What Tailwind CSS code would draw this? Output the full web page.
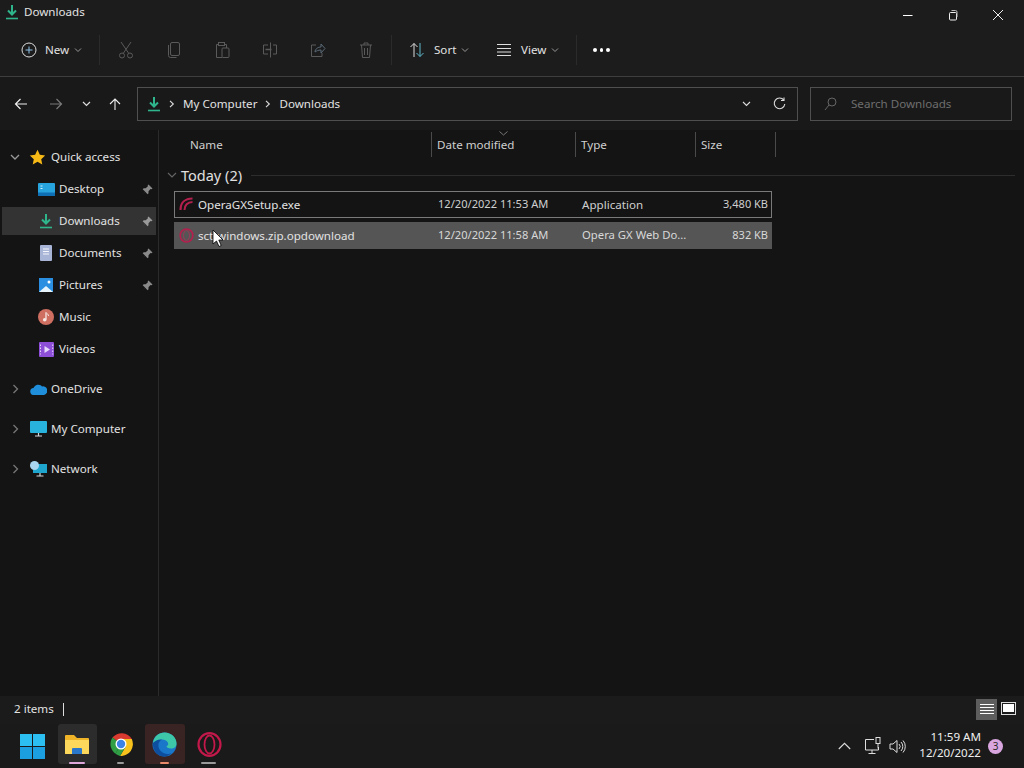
<!DOCTYPE html>
<html lang="en">
<head>
  <meta charset="UTF-8">
  <title>Downloads</title>
  <script src="https://cdn.jsdelivr.net/npm/@tailwindcss/browser@4"></script>
</head>
<body class="relative w-[1024px] h-[768px] overflow-hidden flex flex-col bg-[#141414] text-[#e2e2e2] font-['Noto_Sans','Open_Sans',sans-serif] text-[11.6px]">

  <!-- barra de titulo -->
  <header class="h-[24px] flex items-center bg-[#1c1c1c] shrink-0">
    <svg class="ml-[5px] w-[14px] h-[16px]" viewBox="0 0 14 16"><path d="M7 1v9M3 6.500l4 4 4-4" fill="none" stroke="#2fb58c" stroke-width="2"/><path d="M1 14.500h12" stroke="#2fb58c" stroke-width="1.6"/></svg>
    <span class="ml-[5px]">Downloads</span>
    <div class="ml-auto mt-[5px] flex items-center text-white">
      <svg class="w-[12px] h-[12px] mr-[33px]" viewBox="0 0 12 12"><path d="M1 6.500h9.500" stroke="#fff" stroke-width="1"/></svg>
      <svg class="w-[12px] h-[12px] mr-[33px]" viewBox="0 0 12 12"><rect x="2.500" y="3.500" width="7" height="7.500" rx="1" fill="none" stroke="#eee"/><path d="M4.500 1.500h4a1.500 1.500 0 0 1 1.500 1.500v5" fill="none" stroke="#bbb"/></svg>
      <svg class="w-[12px] h-[12px] mr-[20px]" viewBox="0 0 12 12"><path d="M1 1l10 10M11 1L1 11" stroke="#eee" stroke-width="1"/></svg>
    </div>
  </header>

  <!-- barra de ferramentas -->
  <div class="h-[53px] flex items-center bg-[#1c1c1c] border-b border-[#3e3e3e] shrink-0">
    <div class="w-[99px] flex items-center pl-[21px]">
      <svg class="w-[16px] h-[16px]" viewBox="0 0 16 16"><circle cx="8" cy="8" r="7" fill="none" stroke="#ddd"/><path d="M8 4.500v7M4.500 8h7" stroke="#8fc3e8"/></svg>
      <span class="ml-[8px]">New</span>
      <svg class="ml-[5px] w-[8px] h-[8px]" viewBox="0 0 8 8"><path d="M1 2.500l3 3 3-3" fill="none" stroke="#999"/></svg>
    </div>
    <div class="w-px h-[30px] bg-[#2b2b2b]"></div>
    <div class="flex items-center gap-[28px] pl-[18px] pr-[18px] w-[292px]">
      <svg class="w-[16px] h-[18px] shrink-0" viewBox="0 0 16 18"><path d="M3 1l7.500 11M13 1L5.500 12" fill="none" stroke="#5a5a5a"/><circle cx="4" cy="14.500" r="2.500" fill="none" stroke="#5a5a5a"/><circle cx="12" cy="14.500" r="2.500" fill="none" stroke="#5a5a5a"/></svg>
      <svg class="w-[16px] h-[18px] shrink-0 ml-[4px]" viewBox="0 0 16 18"><rect x="4.500" y="1.500" width="9" height="13" rx="1.500" fill="none" stroke="#5a5a5a"/><path d="M2.500 4v10.500a2 2 0 0 0 2 2h6" fill="none" stroke="#5a5a5a"/></svg>
      <svg class="w-[16px] h-[18px] shrink-0 ml-[4px]" viewBox="0 0 16 18"><path d="M5 3.500H2.500v13H8M10 3.500h2.500V7" fill="none" stroke="#5a5a5a"/><rect x="4.500" y="1.500" width="6" height="3" fill="none" stroke="#5a5a5a"/><rect x="8" y="7" width="7" height="9.500" rx="1" fill="none" stroke="#5a5a5a"/></svg>
      <svg class="w-[16px] h-[18px] shrink-0 ml-[4px]" viewBox="0 0 16 18"><path d="M6 4H1.500v9H6M11 4h3.500v9H11M8.500 1.500v15" fill="none" stroke="#5a5a5a"/><path d="M3.500 8.500h6" stroke="#5a5a5a" stroke-width="1.500"/></svg>
      <svg class="w-[16px] h-[18px] shrink-0 ml-[4px]" viewBox="0 0 16 18"><path d="M6 4H1.500v11.500h10.500V12" fill="none" stroke="#5a5a5a"/><path d="M5 11c0-3 3-5 6-5V3l4 4.500-4 4.500V9c-3 0-4.500 1-6 2z" fill="none" stroke="#5a6a78"/></svg>
      <svg class="w-[14px] h-[18px] shrink-0 ml-[5px]" viewBox="0 0 14 18"><path d="M1 4h12M5 4V2h4v2M2.500 4l1 12.500h7l1-12.500M5.500 7v7M8.500 7v7" fill="none" stroke="#5a5a5a"/></svg>
    </div>
    <div class="w-px h-[30px] bg-[#2b2b2b] -ml-[1px]"></div>
    <div class="flex items-center w-[104px] pl-[17px]">
      <svg class="w-[16px] h-[16px]" viewBox="0 0 16 16"><path d="M5 15V1.500M1.500 5L5 1.500 8.500 5" fill="none" stroke="#ddd"/><path d="M11 1v13.500M7.500 11l3.500 3.500 3.500-3.500" fill="none" stroke="#5fb7c9"/></svg>
      <span class="ml-[9px]">Sort</span>
      <svg class="ml-[5px] w-[8px] h-[8px]" viewBox="0 0 8 8"><path d="M1 2.500l3 3 3-3" fill="none" stroke="#999"/></svg>
    </div>
    <div class="flex items-center w-[80px]">
      <svg class="w-[16px] h-[14px]" viewBox="0 0 16 14"><path d="M1 1.500h14M1 5.500h14M1 9h14M1 12.500h14" stroke="#ddd"/></svg>
      <span class="ml-[9px]">View</span>
      <svg class="ml-[5px] w-[8px] h-[8px]" viewBox="0 0 8 8"><path d="M1 2.500l3 3 3-3" fill="none" stroke="#999"/></svg>
    </div>
    <div class="w-px h-[30px] bg-[#2b2b2b]"></div>
    <div class="ml-[16px] flex gap-[3px]">
      <span class="w-[3.500px] h-[3.500px] rounded-full bg-white"></span>
      <span class="w-[3.500px] h-[3.500px] rounded-full bg-white"></span>
      <span class="w-[3.500px] h-[3.500px] rounded-full bg-white"></span>
    </div>
  </div>

  <!-- barra de endereco -->
  <div class="h-[53px] flex items-center bg-[#191919] shrink-0">
    <div class="w-[137px] flex items-center pl-[14px] shrink-0">
      <svg class="w-[14px] h-[14px]" viewBox="0 0 14 14"><path d="M13 7H2M6.500 2L1.500 7l5 5" fill="none" stroke="#eee" stroke-width="1.200"/></svg>
      <svg class="ml-[21px] w-[14px] h-[14px]" viewBox="0 0 14 14"><path d="M1 7h11M7.500 2l5 5-5 5" fill="none" stroke="#7a7a7a" stroke-width="1.200"/></svg>
      <svg class="ml-[19px] w-[9px] h-[9px]" viewBox="0 0 9 9"><path d="M1 3l3.500 3.500L8 3" fill="none" stroke="#ddd" stroke-width="1.200"/></svg>
      <svg class="ml-[17px] w-[14px] h-[14px]" viewBox="0 0 14 14"><path d="M7 13V2M2 7l5-5 5 5" fill="none" stroke="#eee" stroke-width="1.100"/></svg>
    </div>
    <div class="w-[661px] h-[34px] flex items-center border border-[#4f4f4f] pl-[9px] pr-[11px] shrink-0">
      <svg class="w-[14px] h-[16px]" viewBox="0 0 14 16"><path d="M7 1v9M3 6.500l4 4 4-4" fill="none" stroke="#2fb58c" stroke-width="2"/><path d="M1 14.500h12" stroke="#2fb58c" stroke-width="1.600"/></svg>
      <svg class="ml-[8px] w-[6px] h-[8px]" viewBox="0 0 6 8"><path d="M1 .800L4.300 4 1 7.200" fill="none" stroke="#ddd" stroke-width="1.100"/></svg>
      <span class="ml-[8px]">My Computer</span>
      <svg class="ml-[8px] w-[6px] h-[8px]" viewBox="0 0 6 8"><path d="M1 .800L4.300 4 1 7.200" fill="none" stroke="#ddd" stroke-width="1.100"/></svg>
      <span class="ml-[8px]">Downloads</span>
      <svg class="ml-auto w-[9px] h-[9px]" viewBox="0 0 9 9"><path d="M1 3l3.500 3.500L8 3" fill="none" stroke="#ddd" stroke-width="1.100"/></svg>
      <svg class="ml-[22px] w-[13px] h-[13px]" viewBox="0 0 13 13"><path d="M10.800 3.200A5.300 5.300 0 1 0 11.800 7" fill="none" stroke="#ddd" stroke-width="1.100"/><path d="M11 .500v3H8" fill="none" stroke="#ddd" stroke-width="1.100"/></svg>
    </div>
    <div class="ml-[12px] w-[202px] h-[34px] flex items-center border border-[#4f4f4f] pl-[13px] shrink-0 text-[#6e6e6e]">
      <svg class="w-[13px] h-[14px]" viewBox="0 0 13 14"><circle cx="8" cy="5" r="4" fill="none" stroke="#666"/><path d="M5 8l-4 5" stroke="#666"/></svg>
      <span class="ml-[14px]">Search Downloads</span>
    </div>
  </div>

  <div class="flex-1 flex min-h-0">
    <!-- painel lateral -->
    <nav class="w-[159px] shrink-0 border-r border-[#2b2b2b] pt-[11px] pl-[2px] pr-[2px]">
      <div class="h-[32px] flex items-center">
        <svg class="ml-[8px] w-[10px] h-[10px]" viewBox="0 0 10 10"><path d="M1 3l4 4 4-4" fill="none" stroke="#999" stroke-width="1.300"/></svg>
        <svg class="ml-[9px] w-[17px] h-[17px]" viewBox="0 0 16 16"><path d="M8 .800l2.200 4.700 5 .6-3.700 3.500 1 5L8 12.100l-4.500 2.500 1-5L.800 6.100l5-.6z" fill="#f7b916"/></svg>
        <span class="ml-[5px]">Quick access</span>
      </div>
      <div class="h-[32px] flex items-center">
        <svg class="ml-[36px] w-[17px] h-[13px]" viewBox="0 0 17 13"><rect width="17" height="13" rx="1" fill="#27a3dd"/><rect y="9.500" width="17" height="3.500" fill="#0f6fb5"/><path d="M2.500 3h2M2.500 5.500h2" stroke="#cdeefc"/></svg>
        <span class="ml-[4px]">Desktop</span>
        <svg class="ml-auto mr-[3px] w-[11px] h-[11px]" viewBox="0 0 11 11"><path d="M6.500.500l4 4-1 .8-1-.2-2 2.200 0 2-1 1L3.300 7.800.500 10.500 3.200 7.700.700 5.200l1-1h2l2.200-2-.2-1z" fill="#8a8a8a"/></svg>
      </div>
      <div class="h-[32px] flex items-center">
        <div class="w-full h-[28px] flex items-center bg-[#333333]">
          <svg class="ml-[37px] w-[14px] h-[16px]" viewBox="0 0 14 16"><path d="M7 1v9M3 6.500l4 4 4-4" fill="none" stroke="#2fb58c" stroke-width="2"/><path d="M1 14.500h12" stroke="#2fb58c" stroke-width="1.600"/></svg>
          <span class="ml-[6px]">Downloads</span>
          <svg class="ml-auto mr-[3px] w-[11px] h-[11px]" viewBox="0 0 11 11"><path d="M6.500.500l4 4-1 .8-1-.2-2 2.200 0 2-1 1L3.300 7.800.500 10.500 3.200 7.700.700 5.200l1-1h2l2.200-2-.2-1z" fill="#9a9a9a"/></svg>
        </div>
      </div>
      <div class="h-[32px] flex items-center">
        <svg class="ml-[38px] w-[12px] h-[16px]" viewBox="0 0 12 16"><rect width="12" height="16" rx="1" fill="#a9b5d6"/><path d="M3 4h6M3 6.500h6M3 9h6" stroke="#f4f6fb"/></svg>
        <span class="ml-[7px]">Documents</span>
        <svg class="ml-auto mr-[3px] w-[11px] h-[11px]" viewBox="0 0 11 11"><path d="M6.500.500l4 4-1 .8-1-.2-2 2.200 0 2-1 1L3.300 7.800.500 10.500 3.200 7.700.700 5.200l1-1h2l2.200-2-.2-1z" fill="#8a8a8a"/></svg>
      </div>
      <div class="h-[32px] flex items-center">
        <svg class="ml-[37px] w-[14px] h-[14px]" viewBox="0 0 14 14"><rect width="14" height="14" fill="#2a8fe0"/><path d="M0 14l7-6 7 6z" fill="#e8f4fc"/><circle cx="10" cy="4" r="1.500" fill="#fff"/></svg>
        <span class="ml-[6px]">Pictures</span>
        <svg class="ml-auto mr-[3px] w-[11px] h-[11px]" viewBox="0 0 11 11"><path d="M6.500.500l4 4-1 .8-1-.2-2 2.200 0 2-1 1L3.300 7.800.500 10.500 3.200 7.700.700 5.200l1-1h2l2.200-2-.2-1z" fill="#8a8a8a"/></svg>
      </div>
      <div class="h-[32px] flex items-center">
        <svg class="ml-[36px] w-[16px] h-[16px]" viewBox="0 0 16 16"><circle cx="8" cy="8" r="8" fill="#cf6f62"/><path d="M8 3.500v7" stroke="#f6e7e2" stroke-width="1.300"/><circle cx="6.700" cy="10.700" r="1.800" fill="#f6e7e2"/><path d="M8 3.500c1 1.500 2.500 1.500 2.500 3.500" fill="none" stroke="#f6e7e2"/></svg>
        <span class="ml-[5px]">Music</span>
      </div>
      <div class="h-[32px] flex items-center mb-[8px]">
        <svg class="ml-[37px] w-[15px] h-[15px]" viewBox="0 0 15 15"><rect width="15" height="15" rx="1" fill="#8d4fd8"/><path d="M5.500 4l5.500 3.500L5.500 11z" fill="#e6d8fb"/><path d="M1.500 2.500v10M13.700 2.500v10" stroke="#e6d8fb" stroke-dasharray="1.500 1.500"/></svg>
        <span class="ml-[5px]">Videos</span>
      </div>
      <div class="h-[32px] flex items-center mb-[8px]">
        <svg class="ml-[10px] w-[7px] h-[10px]" viewBox="0 0 7 10"><path d="M1.500 1l4 4-4 4" fill="none" stroke="#777" stroke-width="1.300"/></svg>
        <svg class="ml-[11px] w-[17px] h-[11px]" viewBox="0 0 17 11"><path d="M4 11a3.500 3.500 0 0 1-.5-7A5 5 0 0 1 12 2.500 4 4 0 0 1 14 11z" fill="#1f8fdc"/></svg>
        <span class="ml-[4px]">OneDrive</span>
      </div>
      <div class="h-[32px] flex items-center mb-[8px]">
        <svg class="ml-[10px] w-[7px] h-[10px]" viewBox="0 0 7 10"><path d="M1.500 1l4 4-4 4" fill="none" stroke="#777" stroke-width="1.300"/></svg>
        <svg class="ml-[11px] w-[17px] h-[16px]" viewBox="0 0 17 16"><rect width="17" height="12" rx="1" fill="#27b3dc"/><path d="M8.500 12v2.500M5 15h7" stroke="#cfd8dc" stroke-width="1.200"/></svg>
        <span class="ml-[4px]">My Computer</span>
      </div>
      <div class="h-[32px] flex items-center">
        <svg class="ml-[10px] w-[7px] h-[10px]" viewBox="0 0 7 10"><path d="M1.500 1l4 4-4 4" fill="none" stroke="#777" stroke-width="1.300"/></svg>
        <svg class="ml-[11px] w-[17px] h-[16px]" viewBox="0 0 17 16"><rect x="3" y="3" width="14" height="9" fill="#1fa6cf"/><circle cx="4.500" cy="4.500" r="4.500" fill="#a9d5ee"/><path d="M10 12v2.500M6.500 15h7" stroke="#cfd8dc" stroke-width="1.200"/></svg>
        <span class="ml-[4px]">Network</span>
      </div>
    </nav>

    <!-- lista de arquivos -->
    <main class="flex-1 min-w-0 pl-[15px]">
      <div class="relative h-[27px] mt-[1px] flex items-center text-[#cfcfcf]">
        <span class="w-[257px] pl-[16px] shrink-0">Name</span>
        <span class="w-[144px] pl-[5px] shrink-0 h-[25px] leading-[25px] border-l border-[#4a4a4a]">Date modified</span>
        <span class="w-[120px] pl-[5px] shrink-0 h-[25px] leading-[25px] border-l border-[#4a4a4a]">Type</span>
        <span class="w-[81px] pl-[5px] shrink-0 h-[25px] leading-[25px] border-l border-r border-[#4a4a4a]">Size</span>
        <svg class="absolute left-[325px] top-0 w-[9px] h-[5px]" viewBox="0 0 9 5"><path d="M.500 .500l4 3.500 4-3.500" fill="none" stroke="#777"/></svg>
      </div>
      <div class="flex items-center h-[34px]">
        <svg class="ml-[-7px] w-[10px] h-[10px]" viewBox="0 0 10 10"><path d="M1 3l4 4 4-4" fill="none" stroke="#666" stroke-width="1.100"/></svg>
        <span class="ml-[4px] text-[14.500px] leading-none text-[#e0e0e0]">Today (2)</span>
        <div class="ml-[9px] flex-1 h-px bg-[#2d2d2d] mr-[9px]"></div>
      </div>
      <div class="w-[598px] h-[27px] flex items-center border border-[#7a7a7a] mt-[-1px]">
        <svg class="ml-[4px] w-[15px] h-[15px] shrink-0" viewBox="0 0 15 15"><path d="M1.500 13C1.500 6 6 1.500 13.500 1.500" fill="none" stroke="#b3204e" stroke-width="2.200"/><path d="M5.500 13C5.500 8.500 8.500 5 13.500 5" fill="none" stroke="#b3204e" stroke-width="2"/></svg>
        <span class="ml-[4px] w-[240px] shrink-0">OperaGXSetup.exe</span>
        <span class="w-[144px] shrink-0 text-[11.1px] text-[#cfcfcf]">12/20/2022 11:53 AM</span>
        <span class="w-[120px] shrink-0 text-[#cfcfcf]">Application</span>
        <span class="flex-1 text-right pr-[3px] text-[11px] text-[#cfcfcf]">3,480 KB</span>
      </div>
      <div class="w-[598px] h-[27px] flex items-center bg-[#555555] mt-[4px]">
        <svg class="ml-[5px] w-[15px] h-[15px] shrink-0" viewBox="0 0 15 15"><ellipse cx="7.500" cy="7.500" rx="6.300" ry="6.500" fill="none" stroke="#b3204e" stroke-width="1.700"/><ellipse cx="7.500" cy="7.500" rx="3" ry="5" fill="none" stroke="#9c3a58"/></svg>
        <span class="ml-[4px] w-[240px] shrink-0">sct-windows.zip.opdownload</span>
        <span class="w-[144px] shrink-0 text-[11.1px] text-[#d8d8d8]">12/20/2022 11:58 AM</span>
        <span class="w-[120px] shrink-0 text-[11.3px] text-[#d8d8d8]">Opera GX Web Do...</span>
        <span class="flex-1 text-right pr-[4px] text-[11px] text-[#d8d8d8]">832 KB</span>
      </div>
    </main>
  </div>

  <!-- barra de status -->
  <div class="h-[28px] flex items-center bg-[#1b1b1b] shrink-0 pl-[14px] pr-[6px] pb-[2px]">
    <span>2 items</span>
    <div class="ml-[9px] w-px h-[13px] bg-[#dddddd]"></div>
    <div class="ml-auto flex items-center gap-[2px]">
      <div class="w-[21px] h-[21px] bg-[#5e5e5e] flex items-center justify-center">
        <svg class="w-[14px] h-[13px]" viewBox="0 0 14 13"><path d="M0 1.500h14M0 4.500h14M0 7.500h14M0 10.500h14" stroke="#fff"/></svg>
      </div>
      <div class="w-[19px] h-[21px] flex items-center justify-center">
        <svg class="w-[15px] h-[14px]" viewBox="0 0 15 14"><rect x=".5" y=".5" width="14" height="12" fill="none" stroke="#ddd"/><rect x="2" y="2" width="11" height="8" fill="#fff"/></svg>
      </div>
    </div>
  </div>

  <!-- barra de tarefas -->
  <footer class="h-[44px] flex items-center bg-[#1a1a1a] shrink-0">
    <svg class="ml-[20px] w-[25px] h-[25px] shrink-0" viewBox="0 0 25 25"><rect width="12" height="12" fill="#2cc0f2"/><rect x="13" width="12" height="12" fill="#2cc0f2"/><rect y="13" width="12" height="12" fill="#1b9fe0"/><rect x="13" y="13" width="12" height="12" fill="#1b9fe0"/></svg>
    <div class="relative ml-[13px] w-[39px] h-[40px] -mt-[4px] rounded-[3px] bg-[#2c2c2c] flex items-center justify-center shrink-0">
      <svg class="w-[26px] h-[22px] -ml-[2px]" viewBox="0 0 26 22"><path d="M1 3a1 1 0 0 1 1-1h8l3 3h11a1 1 0 0 1 1 1v15H1z" fill="#f0b429"/><path d="M1 7h24v13a1 1 0 0 1-1 1H2a1 1 0 0 1-1-1z" fill="#fbd75b"/><path d="M8 21v-5a1 1 0 0 1 1-1h8a1 1 0 0 1 1 1v5z" fill="#2a76c9"/></svg>
      <div class="absolute bottom-0 left-[11px] w-[16px] h-[2.500px] rounded-sm bg-[#dfa8dc]"></div>
    </div>
    <div class="relative ml-[4px] w-[39px] h-[40px] -mt-[4px] flex items-center justify-center shrink-0">
      <svg class="w-[24px] h-[24px]" viewBox="0 0 24 24"><path d="M12 12L3.400 5.500A12 12 0 0 1 22.800 7H12z" fill="#d93a2f"/><path d="M12 12l-5.500 9.800A12 12 0 0 1 3.400 5.500z" fill="#2f9e44"/><path d="M12 7h10.800A12 12 0 0 1 11 24l6-10z" fill="#f7c21c"/><path d="M12 12l5 2-6 10a12 12 0 0 1-4.500-2.200z" fill="#2f9e44"/><circle cx="12" cy="12" r="5.500" fill="#fff"/><circle cx="12" cy="12" r="4.200" fill="#3b82e6"/></svg>
      <div class="absolute bottom-0 left-[16px] w-[7px] h-[2.500px] rounded-sm bg-[#9a9a9a]"></div>
    </div>
    <div class="relative ml-[5px] w-[40px] h-[40px] -mt-[4px] rounded-[3px] bg-[#3a2323] flex items-center justify-center shrink-0">
      <svg class="w-[25px] h-[25px] -ml-[1px]" viewBox="0 0 25 25"><circle cx="12.500" cy="12.500" r="12" fill="#1976c9"/><path d="M1 11C2 4 7 .500 12.500 .500c7 0 12 5 12 11 0 3-2 5-5.500 5-3 0-4.500-1-4.500-2.500 2-.5 2-2.500 1-4C14 8 11 7 8 8 4.500 9 2.500 10 1 11z" fill="#3ec6a8"/><path d="M1 11c2-2 5-4 9-3.500-3 1.500-4 4-3.500 7 .5 4 4 7 9 7.500 2 0 3-.5 4-1-2 2-4.500 3.500-7.500 3.500C6 24.500 .500 19 1 11z" fill="#0d4f9e"/></svg>
      <div class="absolute bottom-0 left-[15px] w-[9px] h-[2.500px] rounded-sm bg-[#e98a6a]"></div>
    </div>
    <div class="relative ml-[4px] w-[40px] h-[40px] -mt-[4px] flex items-center justify-center shrink-0">
      <svg class="w-[25px] h-[25px]" viewBox="0 0 25 25"><ellipse cx="12.500" cy="12.500" rx="11" ry="11.300" fill="none" stroke="#c2184a" stroke-width="2.200"/><ellipse cx="12.500" cy="12.500" rx="5" ry="9" fill="none" stroke="#c2184a" stroke-width="1.800"/></svg>
      <div class="absolute bottom-0 left-[12px] w-[15px] h-[2.500px] rounded-sm bg-[#9a9a9a]"></div>
    </div>
    <div class="ml-auto flex items-center">
      <svg class="w-[13px] h-[8px]" viewBox="0 0 13 8"><path d="M.800 7l5.700-5.700L12.200 7" fill="none" stroke="#ddd" stroke-width="1.100"/></svg>
      <svg class="ml-[13px] w-[17px] h-[18px]" viewBox="0 0 17 18"><path d="M10 2.500H1.500v10.500h13V10M8 13v3.500M4.500 16.500h7" fill="none" stroke="#ddd"/><rect x="12" y=".5" width="4" height="6" fill="none" stroke="#ddd"/><path d="M14 6.500v5" stroke="#ddd"/></svg>
      <svg class="ml-[8px] w-[17px] h-[15px]" viewBox="0 0 17 15"><path d="M1 5h3l4-3.500v12L4 10H1z" fill="none" stroke="#ddd"/><path d="M10 5a3.500 3.500 0 0 1 0 5M12 3a6.500 6.500 0 0 1 0 9M14 1.500a9 9 0 0 1 0 12" fill="none" stroke="#ddd"/></svg>
      <div class="ml-[6px] w-[69px] -mt-[2px] text-right leading-[16px] text-[#eeeeee]">
        <div>11:59 AM</div>
        <div>12/20/2022</div>
      </div>
      <div class="ml-[7px] mr-[21px] w-[15px] h-[15px] rounded-full bg-[#d9a6e0] text-[#2b2b2b] text-[10px] flex items-center justify-center">3</div>
    </div>
  </footer>

  <!-- cursor do mouse -->
  <svg class="absolute left-[212px] top-[229px] w-[12px] h-[18px]" viewBox="0 0 12 18"><path d="M1 1v14l3.500-3 2.500 5.500 2.200-1L6.800 11H11z" fill="#fff" stroke="#000" stroke-width=".8"/></svg>
</body>
</html>
